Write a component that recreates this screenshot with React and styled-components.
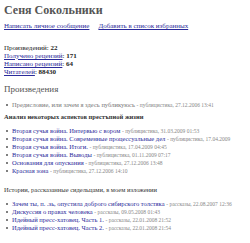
import styled, { createGlobalStyle } from "styled-components";

const Global = createGlobalStyle`
  body {
    margin: 0;
    background: #fff;
    font-family: "Liberation Serif", "Times New Roman", serif;
    color: #222;
    overflow: hidden;
  }
`;

const Page = styled.div`
  padding: 3px 4px;
  overflow: hidden;
`;

const Title = styled.h1`
  margin: 0;
  font-size: 12px;
  line-height: 14px;
  font-weight: bold;
  color: #555;
`;

const Actions = styled.div`
  display: flex;
  gap: 9px;
  margin-top: 5px;
  font-size: 7px;
  line-height: 9px;
  white-space: nowrap;
`;

const Link = styled.a`
  color: ${({ $muted }) => ($muted ? "#777" : "#2a2a9a")};
  text-decoration: ${({ $plain }) => ($plain ? "none" : "underline")};
  cursor: pointer;
`;

const Stats = styled.div`
  margin-top: 13px;
  font-size: 7px;
  line-height: 8px;
  color: #222;

  b {
    font-weight: bold;
  }
`;

const Heading = styled.h2`
  margin: 8px 0 0;
  font-size: 9px;
  line-height: 11px;
  font-weight: normal;
  color: #555;
`;

const List = styled.ul`
  margin: ${({ $top }) => $top || 6}px 0 0;
  padding: 0 0 0 8px;
  font-size: 6.5px;
  line-height: 8px;

  li {
    list-style: none;
    position: relative;
    white-space: nowrap;
  }

  li::before {
    content: "";
    position: absolute;
    left: -6px;
    top: 3px;
    width: 2px;
    height: 2px;
    border-radius: 50%;
    background: #555;
  }
`;

const Meta = styled.span`
  color: #888;
  font-size: 5.5px;
`;

const Group = styled.div`
  margin-top: ${({ $top }) => $top}px;
  font-size: 6.5px;
  line-height: 8px;
  font-weight: ${({ $bold }) => ($bold ? "bold" : "normal")};
  color: #333;
  white-space: nowrap;
`;

const Item = ({ title, meta, muted }) => (
  <li>
    <Link $plain $muted={muted}>{title}</Link> <Meta>- {meta}</Meta>
  </li>
);

const crime = [
  ["Вторая сучья война. Интервью с вором", "публицистика, 31.03.2009 01:53"],
  ["Вторая сучья война. Современные процессуальные дел", "публицистика, 17.04.2009"],
  ["Вторая сучья война. Итоги.", "публицистика, 17.04.2009 04:45"],
  ["Вторая сучья война. Выводы", "публицистика, 01.11.2009 07:17"],
  ["Основания для опускания", "публицистика, 27.12.2006 13:48"],
  ["Красная зона", "публицистика, 27.12.2006 14:10"],
];

const stories = [
  ["Зачем ты, п. .зь, опустила доброго сибирского толстяка", "рассказы, 22.08.2007 12:36"],
  ["Дискуссия о правах человека", "рассказы, 09.05.2008 01:43"],
  ["Идейный пресс-хатовец. Часть 1.", "рассказы, 22.01.2008 21:52"],
  ["Идейный пресс-хатовец. Часть 2.", "рассказы, 22.01.2008 21:54"],
];

export default function App() {
  return (
    <Page>
      <Global />
      <Title>Сеня Сокольники</Title>
      <Actions>
        <Link>Написать личное сообщение</Link>
        <Link>Добавить в список избранных</Link>
      </Actions>
      <Stats>
        <div>Произведений: <b>22</b></div>
        <div><Link>Получено рецензий</Link>: <b>171</b></div>
        <div><Link>Написано рецензий</Link>: <b>64</b></div>
        <div><Link>Читателей</Link>: <b>88430</b></div>
      </Stats>
      <Heading>Произведения</Heading>
      <List $top={6}>
        <Item muted title="Предисловие, или зачем я здесь публикуюсь" meta="публицистика, 27.12.2006 13:41" />
      </List>
      <Group $top={4} $bold>Анализ некоторых аспектов престъпной жизни</Group>
      <List $top={6}>
        {crime.map(([t, m]) => (
          <Item key={t} title={t} meta={m} />
        ))}
      </List>
      <Group $top={11}>Истории, рассказанные сидельцами, в моем изложении</Group>
      <List $top={6}>
        {stories.map(([t, m]) => (
          <Item key={t} title={t} meta={m} />
        ))}
      </List>
    </Page>
  );
}
